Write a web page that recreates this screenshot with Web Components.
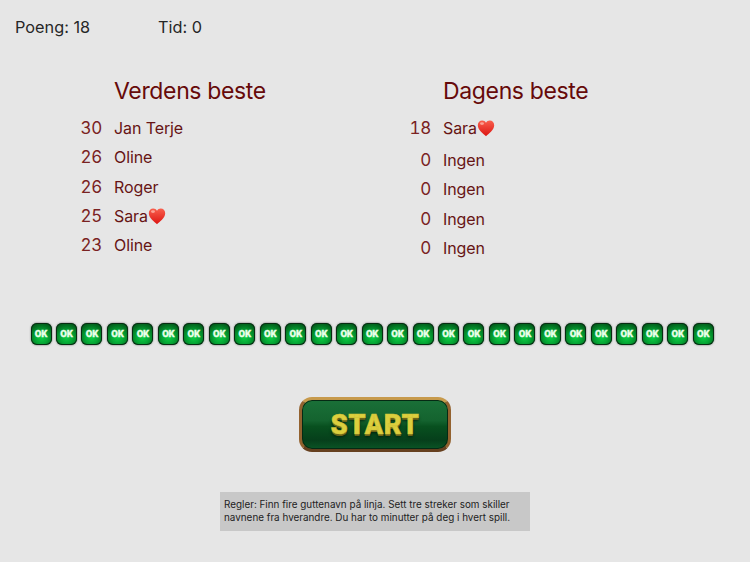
<!DOCTYPE html>
<html lang="no">
<head>
<meta charset="utf-8">
<title>Guttenavn</title>
<style>
  html, body { margin: 0; height: 100%; }
  body { background: #e6e6e6; font-family: Inter, "Liberation Sans", sans-serif; }
</style>
</head>
<body>
<game-screen>
  <score-bar slot="top" points="18" time="0"></score-bar>

  <score-table slot="tables" title="Verdens beste">
    <score-row points="30">Jan Terje</score-row>
    <score-row points="26">Oline</score-row>
    <score-row points="26">Roger</score-row>
    <score-row points="25">Sara<red-heart></red-heart></score-row>
    <score-row points="23">Oline</score-row>
  </score-table>

  <score-table slot="tables" title="Dagens beste">
    <score-row points="18" tall>Sara<red-heart></red-heart></score-row>
    <score-row points="0">Ingen</score-row>
    <score-row points="0">Ingen</score-row>
    <score-row points="0">Ingen</score-row>
    <score-row points="0">Ingen</score-row>
  </score-table>

  <ok-row slot="keys" count="27"></ok-row>
  <start-button slot="start">START</start-button>
  <rules-box slot="rules">Regler: Finn fire guttenavn på linja. Sett tre streker som skiller navnene fra hverandre. Du har to minutter på deg i hvert spill.</rules-box>
</game-screen>

<script>
class GameScreen extends HTMLElement {
  constructor() {
    super();
    this.attachShadow({ mode: "open" });
    this.shadowRoot.innerHTML = `
      <style>
        :host {
          display: flex;
          flex-direction: column;
          width: 750px;
          height: 562px;
          overflow: hidden;
        }
        .tables {
          display: grid;
          grid-template-columns: 329px 281px;
          padding: 37px 0 0 70px;
        }
        .keys { padding-top: 58px; }
        .start { display: flex; justify-content: center; padding-top: 52px; }
        .rules { display: flex; justify-content: center; padding-top: 40px; }
      </style>
      <slot name="top"></slot>
      <div class="tables"><slot name="tables"></slot></div>
      <div class="keys"><slot name="keys"></slot></div>
      <div class="start"><slot name="start"></slot></div>
      <div class="rules"><slot name="rules"></slot></div>
    `;
  }
}

class ScoreBar extends HTMLElement {
  constructor() {
    super();
    this.attachShadow({ mode: "open" });
  }

  connectedCallback() {
    const points = this.getAttribute("points") || "0";
    const time = this.getAttribute("time") || "0";
    this.shadowRoot.innerHTML = `
      <style>
        :host {
          display: flex;
          padding: 16px 0 0 15px;
          height: 23px;
          font-size: 16.3px;
          line-height: 23px;
          color: #262626;
        }
        .points { width: 143px; }
      </style>
      <div class="points">Poeng: ${points}</div>
      <div>Tid: ${time}</div>
    `;
  }
}

class ScoreTable extends HTMLElement {
  constructor() {
    super();
    this.attachShadow({ mode: "open" });
  }

  connectedCallback() {
    this.shadowRoot.innerHTML = `
      <style>
        :host { display: block; color: #6b0f0f; }
        h2 {
          margin: 0 0 10px 44px;
          font-size: 23px;
          line-height: 30px;
          font-weight: 400;
          letter-spacing: -.35px;
          color: #660a0a;
        }
      </style>
      <h2>${this.getAttribute("title") || ""}</h2>
      <slot></slot>
    `;
  }
}

class ScoreRow extends HTMLElement {
  constructor() {
    super();
    this.attachShadow({ mode: "open" });
  }

  connectedCallback() {
    this.shadowRoot.innerHTML = `
      <style>
        :host {
          display: grid;
          grid-template-columns: 32px 1fr;
          column-gap: 12px;
          height: ${this.hasAttribute("tall") ? "32px" : "29.3px"};
          font-size: 16px;
          line-height: 24px;
          letter-spacing: -.1px;
        }
        .points {
          text-align: right;
          color: #7a2222;
          font-size: 17px;
          letter-spacing: -.3px;
          font-variant-numeric: tabular-nums;
        }
        .name { display: flex; align-items: flex-start; color: #661414; }
      </style>
      <div class="points">${this.getAttribute("points") || "0"}</div>
      <div class="name"><slot></slot></div>
    `;
  }
}

class RedHeart extends HTMLElement {
  constructor() {
    super();
    this.attachShadow({ mode: "open" });
    this.shadowRoot.innerHTML = `
      <style>
        :host { display: block; width: 18px; height: 18px; margin-top: 3px; }
        svg { display: block; }
      </style>
      <svg width="18" height="18" viewBox="0 0 18 18">
        <defs>
          <linearGradient id="h" x1="0" y1="0" x2="0" y2="1">
            <stop offset="0" stop-color="#f9604e"/>
            <stop offset="1" stop-color="#dc1512"/>
          </linearGradient>
        </defs>
        <path fill="url(#h)" d="M9 17.2C6.6 15 .8 11.2.8 6.2.8 3.3 2.9 1.4 5.2 1.4 6.9 1.4 8.2 2.3 9 3.7 9.8 2.3 11.100 1.4 12.800 1.400c2.300 0 4.400 1.900 4.400 4.800 0 5-5.800 8.800-8.200 11z"/>
        <ellipse cx="5" cy="4.600" rx="2" ry="1.300" fill="#ffc4b8" opacity=".7"/>
      </svg>
    `;
  }
}

class OkKey extends HTMLElement {
  constructor() {
    super();
    this.attachShadow({ mode: "open" });
    this.shadowRoot.innerHTML = `
      <style>
        :host {
          display: flex;
          align-items: center;
          justify-content: center;
          box-sizing: border-box;
          width: 21px;
          height: 22px;
          border-radius: 6px;
          background: radial-gradient(circle at 50% 65%, #0ccf45 0, #05a534 36%, #026c20 70%, #014515 100%);
          box-shadow: inset 0 0 0 1px #082c12, 0 0 2px #555;
          color: #e9ffe9;
          font: 900 9.5px/1 Roboto, "Liberation Sans", sans-serif;
          letter-spacing: -.1px;
          -webkit-text-stroke: .3px #e9ffe9;
        }
      </style>
      OK
    `;
  }
}

class OkRow extends HTMLElement {
  constructor() {
    super();
    this.attachShadow({ mode: "open" });
  }

  connectedCallback() {
    const count = parseInt(this.getAttribute("count"), 10) || 0;
    this.shadowRoot.innerHTML = `
      <style>
        :host {
          display: flex;
          gap: 4.480px;
          padding-left: 30.500px;
        }
      </style>
      ${"<ok-key></ok-key>".repeat(count)}
    `;
  }
}

class StartButton extends HTMLElement {
  constructor() {
    super();
    this.attachShadow({ mode: "open" });
    this.shadowRoot.innerHTML = `
      <style>
        :host { display: block; }
        button {
          display: block;
          box-sizing: border-box;
          width: 152px;
          height: 55px;
          padding: 0;
          border: 3px solid #93622f;
          border-top-color: #c79a4c;
          border-bottom-color: #66401f;
          border-radius: 13px;
          background: linear-gradient(#1a7038 0, #14632f 42%, #08501f 54%, #063f1b 82%, #0b5526 100%);
          box-shadow: inset 0 0 0 1px #052a14;
          color: #dccf3e;
          font: 900 27.500px/1 Roboto, "Liberation Sans", sans-serif;
          letter-spacing: .5px;
          text-shadow: 0 2px 0 #6b6418, 0 3px 3px #02200c;
          -webkit-text-stroke: .5px #d0c236;
        }
      </style>
      <button type="button"><slot></slot></button>
    `;
  }
}

class RulesBox extends HTMLElement {
  constructor() {
    super();
    this.attachShadow({ mode: "open" });
    this.shadowRoot.innerHTML = `
      <style>
        :host {
          display: block;
          box-sizing: border-box;
          width: 310px;
          height: 39px;
          padding: 6px 4px 0;
          background: #c8c8c8;
          color: #222;
          font-size: 9.900px;
          line-height: 13px;
        }
      </style>
      <slot></slot>
    `;
  }
}

customElements.define("game-screen", GameScreen);
customElements.define("score-bar", ScoreBar);
customElements.define("score-table", ScoreTable);
customElements.define("score-row", ScoreRow);
customElements.define("red-heart", RedHeart);
customElements.define("ok-key", OkKey);
customElements.define("ok-row", OkRow);
customElements.define("start-button", StartButton);
customElements.define("rules-box", RulesBox);
</script>
</body>
</html>
